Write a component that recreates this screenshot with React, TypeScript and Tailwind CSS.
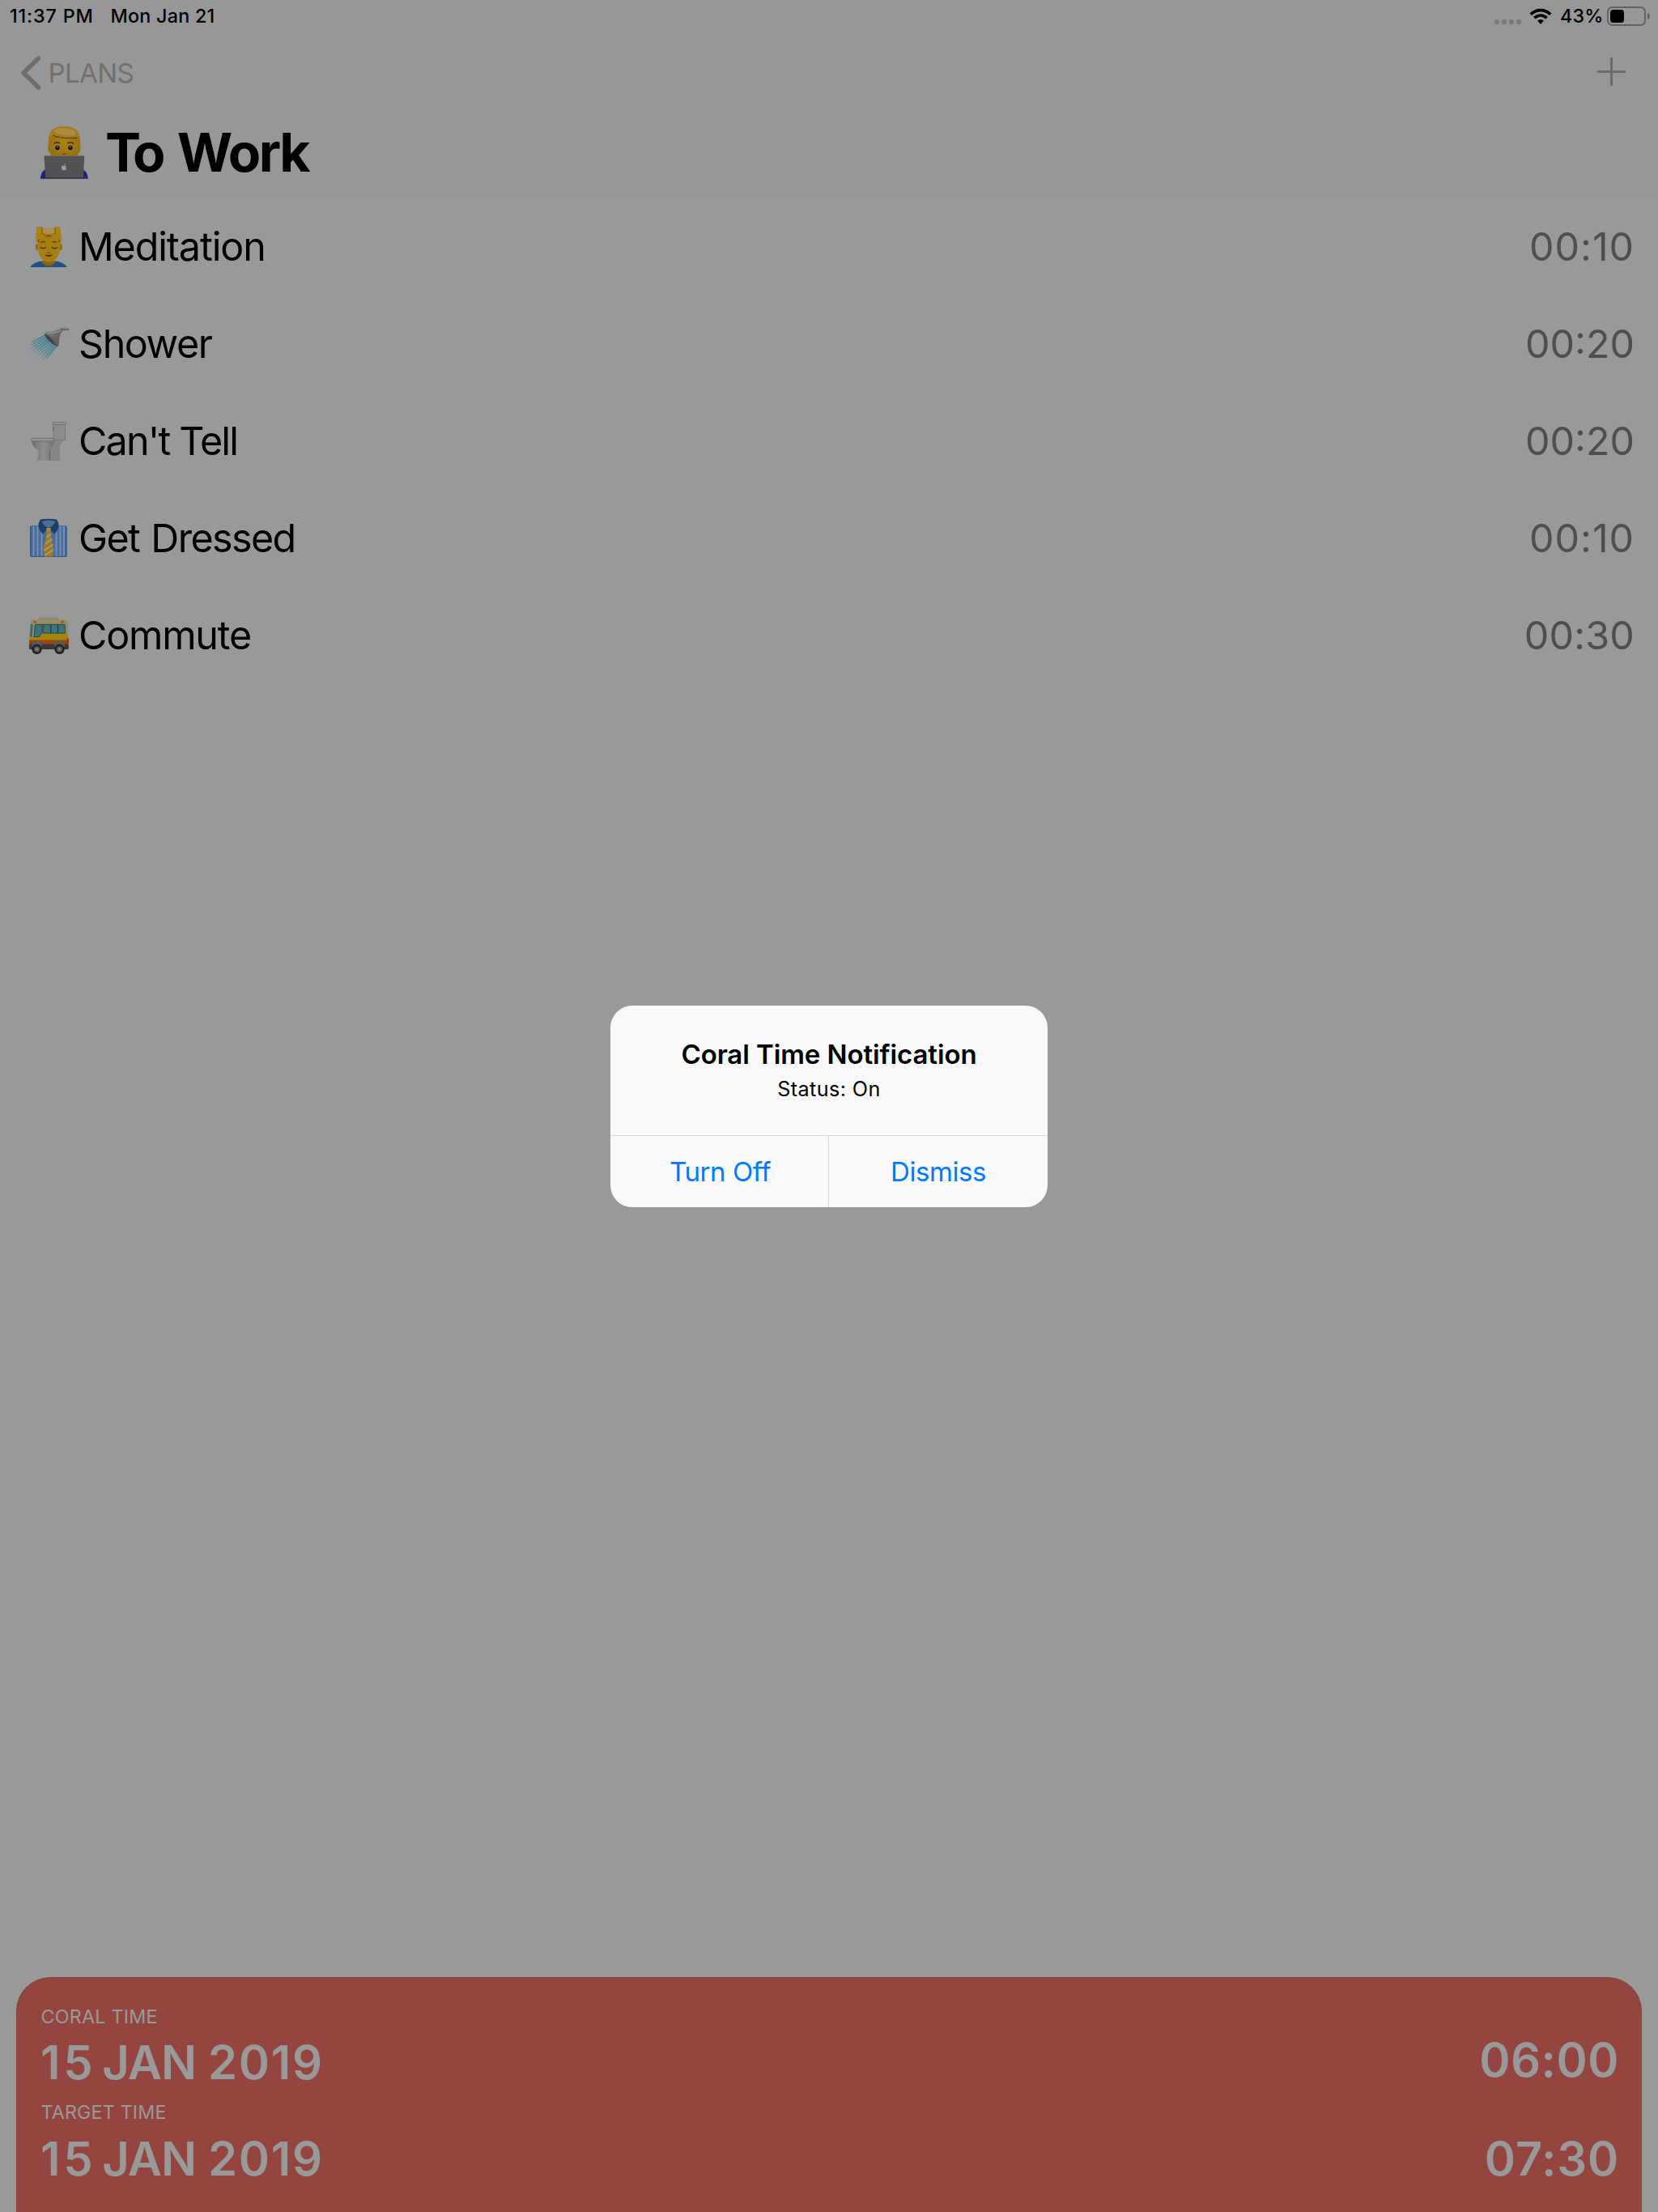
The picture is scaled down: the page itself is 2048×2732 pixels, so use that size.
import type { ReactNode } from 'react';

function TechnologistEmoji() {
  return (
    <svg viewBox="49 156 62 66" className="h-[66px] w-[62px] shrink-0">
      <defs>
        <linearGradient id="hair" x1="0" y1="0" x2="0" y2="1">
          <stop offset="0" stopColor="#a87d1c" />
          <stop offset="0.5" stopColor="#a47b22" />
          <stop offset="1" stopColor="#8d6410" />
        </linearGradient>
        <radialGradient id="face" cx="0.5" cy="0.5" r="0.6">
          <stop offset="0" stopColor="#a98516" />
          <stop offset="1" stopColor="#95700c" />
        </radialGradient>
      </defs>
      <path d="M49.7 221.7 Q51 211.5 57 210 H101 Q107.500 211.500 109 221.700 Z" fill="#1c2183" />
      <ellipse cx="61.500" cy="184" rx="2.200" ry="5" fill="#8d680e" />
      <ellipse cx="97" cy="184" rx="2.200" ry="5" fill="#8d680e" />
      <path d="M60.300 174 Q60 157 79 157 Q98.500 157 98.500 174 V183 Q98.500 190 95 194 H64 Q60.300 189 60.300 183 Z" fill="url(#face)" />
      <path d="M60.300 181 V173 Q60 157 79 157 Q99 157 98.800 173 V181 Q97.500 174 95.500 171.500 Q75 174 65 168 Q62 172 60.300 181 Z" fill="url(#hair)" />
      <path d="M65 168 Q75 173 95.500 171.300" fill="none" stroke="#65430a" strokeWidth="1.200" />
      <path d="M66 163 Q78 155.500 93 163 Q95 169 84 168.500 Q72 168 66 163 Z" fill="#b0904a" opacity="0.8" />
      <path d="M66.500 178.500 Q70 175.500 74 178 M83.500 178 Q87.500 175.500 91 178.500" fill="none" stroke="#4d2f08" strokeWidth="1.800" />
      <ellipse cx="71" cy="183.500" rx="3.500" ry="3.700" fill="#a49167" />
      <ellipse cx="87" cy="183.500" rx="3.500" ry="3.700" fill="#a49167" />
      <circle cx="71" cy="183.500" r="2.900" fill="#20180d" />
      <circle cx="87" cy="183.500" r="2.900" fill="#20180d" />
      <circle cx="71" cy="182.300" r="0.900" fill="#908a7d" />
      <circle cx="87" cy="182.300" r="0.900" fill="#908a7d" />
      <path d="M76.500 190.500 Q79 192.500 81.500 190.500" fill="none" stroke="#6e4c05" strokeWidth="1.400" />
      <path d="M56 193 H102.500 Q104.300 193 104.200 195 L102.800 221.700 H56.300 L54.500 195 Q54.500 193 56 193 Z" fill="#515254" />
      <path d="M55.500 193.500 H103.300" stroke="#6d6e70" strokeWidth="1" />
      <path d="M56.200 220.800 H102.800" stroke="#3a3a3c" strokeWidth="1.600" />
      <path d="M79 206 Q76 204.500 76 208 Q76.500 211.500 78.200 211.300 Q79.200 210.800 80.200 211.300 Q81.600 211.300 82.300 209.200 Q80.300 208 82 205.900 Q80.500 204.900 79 206 Z M79.200 205 Q79.200 203.200 80.800 202.800 Q80.800 204.600 79.200 205 Z" fill="#9c9c9c" />
    </svg>
  );
}

function RowEmoji({ children }: { children: ReactNode }) {
  return (
    <svg viewBox="35 279 50 52" className="mt-[2px] mr-[12px] h-[52px] w-[50px] shrink-0">
      {children}
    </svg>
  );
}

function MassageEmoji() {
  return (
    <RowEmoji>
      <path d="M37 330 Q41 323.500 52 322.500 H68 Q79 323.500 83 330 Z" fill="#235085" />
      <path d="M51 322.500 Q53 328 60 328.500 Q67 328 69 322.500 Z" fill="#8a660b" />
      <path d="M46.500 299 Q45 286 52 283 Q60 280.500 68 283 Q76 286 74.500 299 L72 303 H49 Z" fill="#a17718" />
      <ellipse cx="45.800" cy="305" rx="2" ry="4" fill="#8f6a0d" />
      <ellipse cx="75" cy="305" rx="2" ry="4" fill="#8f6a0d" />
      <path d="M46.500 299 Q48 293 50 292 H70.500 Q73 293 74.500 299 Q75.500 322 60.500 323.700 Q45.500 322 46.500 299 Z" fill="#a57f12" />
      <ellipse cx="60" cy="285.500" rx="8" ry="3.500" fill="#ae9150" />
      <path d="M47.500 299 Q47.500 291.500 52 291 Q59 292.500 60.500 291 Q63 293 70 291 Q73.500 292 73.200 299" fill="none" stroke="#5f410c" strokeWidth="1.300" />
      <path d="M45.300 280 H51.800 V290 Q55 290.500 58.500 292 L50 294 Q46.500 296 45.500 301 Q43.500 296 44.500 290 Z" fill="#aa8211" />
      <path d="M68.200 280 H74 L75.500 290 Q76.800 296 75 301 Q74 296 70.500 294 L62 292 Q65 290.500 68.200 290 Z" fill="#aa8211" />
      <path d="M51.800 280 V290 M68.200 280 V290" stroke="#7c5a0c" strokeWidth="0.900" />
      <path d="M50.500 299.500 Q53 297.500 56 299.200 M64.500 299.200 Q67.500 297.500 70 299.500" fill="none" stroke="#5b3d08" strokeWidth="1.400" />
      <path d="M49.500 305.500 Q53 308 57 305.500 M63.500 305.500 Q67.500 308 71 305.500" fill="none" stroke="#4a3108" strokeWidth="1.300" />
      <path d="M58.500 311.500 Q60.300 313 62 311.500" fill="none" stroke="#76540a" strokeWidth="1.200" />
      <path d="M56 315.300 H64.500 Q60.200 317.800 56 315.300" fill="#49260d" stroke="#49260d" strokeWidth="0.800" />
    </RowEmoji>
  );
}

function ShowerEmoji() {
  return (
    <RowEmoji>
      <defs>
        <linearGradient id="spray" gradientUnits="userSpaceOnUse" x1="64" y1="299" x2="42" y2="322">
          <stop offset="0" stopColor="#37808f" />
          <stop offset="0.6" stopColor="#548995" />
          <stop offset="1" stopColor="#8f9798" stopOpacity="0.1" />
        </linearGradient>
        <linearGradient id="steel" x1="0" y1="0" x2="1" y2="1">
          <stop offset="0" stopColor="#858585" />
          <stop offset="0.5" stopColor="#666" />
          <stop offset="1" stopColor="#4d4d4d" />
        </linearGradient>
      </defs>
      <path
        d="M55.500 294 L39 303 M57 296 L37 307.500 M58.500 298 L36 311.500 M60 299.500 L37.500 314.500 M61.500 301 L39 317.500 M63 302.500 L42 319.500 M64.500 304 L45 321.500 M66 305.500 L48 323.500 M67.500 307 L52.500 324 M69.500 308 L57 323"
        stroke="url(#spray)"
        strokeWidth="1.600"
      />
      <path d="M56 291.500 Q66 293 72 307 L69 307.500 Q58 301 55 293 Z" fill="#444" />
      <path d="M55.500 290.500 Q66 289.500 72.500 287 Q77 284.500 80 284.800 H85 V287.500 H80 Q77 288.500 75 291.500 Q72.500 299 72.500 307 L70.500 308.500 Q65 296 54.800 292 Z" fill="url(#steel)" />
      <path d="M59 291.500 Q69 291.500 75 288" fill="none" stroke="#999" strokeWidth="1.200" />
      <path d="M78 285.500 H85" stroke="#8d8d8d" strokeWidth="1" />
      <path d="M79 287.600 H85" stroke="#5a5a5a" strokeWidth="0.800" />
    </RowEmoji>
  );
}

function ToiletEmoji() {
  return (
    <RowEmoji>
      <defs>
        <linearGradient id="porcelain" x1="0" y1="0" x2="1" y2="0">
          <stop offset="0" stopColor="#6c6c6c" />
          <stop offset="0.5" stopColor="#8f8f8e" />
          <stop offset="1" stopColor="#747473" />
        </linearGradient>
      </defs>
      <path d="M65 302 H80.500 Q73 306 73 315 L74 328.500 H60 V304 Z" fill="#868685" stroke="#777" strokeWidth="0.500" />
      <path d="M65.500 284 H80.500 V303.500 H66.500 Z" fill="#8d8d8b" stroke="#6c6c6b" strokeWidth="0.700" />
      <rect x="65" y="281.500" width="17" height="2.800" rx="1" fill="#959594" stroke="#6a6a69" strokeWidth="0.700" />
      <path d="M39 305 H67 Q66 313 60.500 316 V322 L62 328.800 H46 L47.500 322 V316 Q40 313 39 305 Z" fill="url(#porcelain)" />
      <path d="M61.500 316 V328.500" stroke="#5c5c5c" strokeWidth="0.900" />
      <rect x="38.500" y="301.300" width="28.500" height="3.600" rx="1.800" fill="#939392" stroke="#606060" strokeWidth="0.800" />
      <path d="M66 288 V291" stroke="#5d5d5d" strokeWidth="1" />
    </RowEmoji>
  );
}

function ShirtEmoji() {
  return (
    <RowEmoji>
      <rect x="37.200" y="289" width="45.300" height="38.800" rx="2.500" fill="#4a6c9a" />
      <path d="M41.500 290 V327 M46.500 290 V327 M51.500 290 V327 M69.500 290 V327 M74.500 290 V327 M79 290 V327" stroke="#7590b3" strokeWidth="1.900" />
      <path d="M37.700 290 V327 M82 290 V327" stroke="#2e4e7c" strokeWidth="1" />
      <path d="M38 327.300 H82" stroke="#32527e" strokeWidth="1" />
      <path d="M52 283 Q60 280 68 283 L62 293 H58 Z" fill="#59799b" />
      <path d="M50 281.500 Q60 279.800 70 281.500 L72.500 286.500 Q73 293 67.500 299.500 L60 292.500 L52.500 299.500 Q47 293 47.500 286.500 Z" fill="#1c3d66" />
      <path d="M51.500 284 Q60 281 68.500 284 Q66 290 60 292 Q54 290 51.500 284 Z" fill="#4b6d92" />
      <path d="M57 292 H63 L62.300 298.500 L66.300 318 L65 327.500 H55 L53.700 318 L57.700 298.500 Z" fill="#a3791e" />
      <path d="M57.500 303.500 L63 299.500 M55.800 312 L64.500 305.500 M54.500 320 L65.500 312.500 M55.500 326 L66 319" stroke="#a29b87" strokeWidth="1.900" />
      <ellipse cx="60" cy="294" rx="2.500" ry="1.800" fill="#9b8c67" />
    </RowEmoji>
  );
}

function BusEmoji() {
  return (
    <RowEmoji>
      <rect x="48" y="282.500" width="24.500" height="3.500" rx="1.500" fill="#8d8872" />
      <path d="M39 286.500 Q39.500 285 42 285 H79 Q83 285 83.500 289 L84.300 307 V317 H36 V309 L37 293 Q38 288 39 286.500 Z" fill="#958d68" />
      <path d="M41 306 H50 L53 302.500 H83.300 L84.300 311 H36 Q36.500 307 41 306 Z" fill="#a28609" />
      <rect x="36" y="310.500" width="48.500" height="5.500" fill="#9b4210" />
      <rect x="36" y="315.500" width="48.800" height="6.500" rx="1.500" fill="#37383a" />
      <path d="M38 291 H40.800 L39.500 306.500 H36.800 Z" fill="#356b70" />
      <path d="M43.500 291.300 H52 V301 L48.500 306.500 H42 Z" fill="#3d747a" stroke="#263b3d" strokeWidth="0.900" />
      <path d="M53 291.300 H80 L80.500 302 H53 Z" fill="#3d747a" stroke="#263b3d" strokeWidth="0.900" />
      <path d="M62.800 291.300 V302 M71.500 291.300 V302" stroke="#26393b" strokeWidth="1.200" />
      <rect x="41" y="287" width="4" height="2.600" rx="0.800" fill="#9d5b0b" />
      <rect x="75" y="287" width="4" height="2.600" rx="0.800" fill="#9d5b0b" />
      <rect x="83" y="308.500" width="1.800" height="6" fill="#962d22" />
      <path d="M39 319 Q39 311.500 45.500 311.500 Q52 311.500 52 319 Z M67 319 Q67 311.500 73.500 311.500 Q80 311.500 80 319 Z" fill="#56585a" />
      <circle cx="45.500" cy="321.800" r="6.200" fill="#232325" />
      <circle cx="73.500" cy="321.800" r="6.200" fill="#232325" />
      <circle cx="45.500" cy="321.800" r="3.500" fill="#5c5d60" />
      <circle cx="73.500" cy="321.800" r="3.500" fill="#5c5d60" />
      <circle cx="45.500" cy="321.800" r="1.400" fill="#8b8c8e" />
      <circle cx="73.500" cy="321.800" r="1.400" fill="#8b8c8e" />
    </RowEmoji>
  );
}

const activities = [
  { icon: <MassageEmoji />, name: 'Meditation', tracking: 'tracking-[-1.1px]', time: '00:10', timeTracking: 'tracking-[0.95px]' },
  { icon: <ShowerEmoji />, name: 'Shower', tracking: 'tracking-[-1.4px]', time: '00:20', timeTracking: 'tracking-[0px]' },
  { icon: <ToiletEmoji />, name: "Can't Tell", tracking: 'tracking-[-1.8px]', time: '00:20', timeTracking: 'tracking-[0px]' },
  { icon: <ShirtEmoji />, name: 'Get Dressed', tracking: 'tracking-[-1.6px] [word-spacing:2px]', time: '00:10', timeTracking: 'tracking-[0.95px]' },
  { icon: <BusEmoji />, name: 'Commute', tracking: 'tracking-[-1.2px]', time: '00:30', timeTracking: 'tracking-[0.15px]' },
];

function StatusBar() {
  return (
    <div className="flex h-[39px] items-center pl-[12px] pr-[9px] text-[23.3px] leading-[39px] font-medium">
      <span className="w-[124.5px] tracking-[0.85px]">11:37 PM</span>
      <span className="tracking-[0.25px]">Mon Jan 21</span>
      <div className="ml-auto flex h-full items-center">
        <div className="mt-[15px] mr-[10px] flex gap-[3px]">
          {[0, 1, 2, 3].map((dot) => (
            <span key={dot} className="size-[6px] rounded-[2px] bg-[#7b7b7b]" />
          ))}
        </div>
        <svg viewBox="0 0 28 20" className="mr-[10px] h-[20px] w-[28px]">
          <path d="M1.800 7.700 C8.500 0.800 19.500 0.800 26.200 7.700" fill="none" stroke="#000" strokeWidth="3.800" />
          <path d="M6.400 12.100 C11 8 17 8 21.600 12.100" fill="none" stroke="#000" strokeWidth="3.800" />
          <path d="M10 15.600 Q14 12.200 18 15.600 L14.700 19.200 Q14 20 13.300 19.200 Z" fill="#000" />
        </svg>
        <span className="w-[58px] tracking-[0.2px]">43%</span>
        <svg viewBox="0 0 54 24" className="mt-[1px] h-[24px] w-[54px]">
          <rect x="1" y="1" width="46" height="22" rx="5.500" fill="none" stroke="#636363" strokeWidth="2" />
          <rect x="4" y="4" width="17" height="16" rx="3.500" fill="#000" />
          <path d="M50 8 Q53 9 53 12 Q53 15 50 16 Z" fill="#636363" />
        </svg>
      </div>
    </div>
  );
}

function DateLabel() {
  return (
    <span>
      <span className="mr-[-7px] tracking-[3.8px]">15</span> <span className="tracking-[-0.9px]">JAN</span>{' '}
      <span className="tracking-[1.7px]">2019</span>
    </span>
  );
}

export default function App() {
  return (
    <div className="relative flex h-[2732px] w-[2048px] flex-col overflow-hidden bg-[#999999] font-['Inter','Liberation_Sans',sans-serif] text-black">
      <header className="h-[244px] bg-[#979797]">
        <StatusBar />
        <nav className="flex h-[102px] items-center justify-between pl-[25px] pr-[40px]">
          <button className="flex items-center text-[33px] leading-[40px] font-normal tracking-[-0.6px] text-[#717171]">
            <svg viewBox="0 0 26 44" className="mr-[8.5px] h-[44px] w-[26px]">
              <path d="M22.500 4 L4 22 L22.500 40" fill="none" stroke="#6e6e6e" strokeWidth="5.500" strokeLinecap="round" strokeLinejoin="round" />
            </svg>
            PLANS
          </button>
          <svg viewBox="0 0 35 35" className="mb-[3px] size-[35px]">
            <path d="M17.500 0 V35 M0 17.500 H35" stroke="#6b6b6b" strokeWidth="3" />
          </svg>
        </nav>
        <h1 className="flex h-[94px] items-center pl-[49px] text-[66px] leading-[94px] font-bold">
          <TechnologistEmoji />
          <span className="ml-[19px] tracking-[-2.4px] [word-spacing:3.5px]">
            <span className="tracking-[-10px]">T</span>o Work
          </span>
        </h1>
      </header>

      <ul>
        {activities.map((a) => (
          <li key={a.name} className="flex h-[120px] items-center pl-[35px] pr-[29px] text-[48.4px] leading-[120px]">
            {a.icon}
            <span className={`mt-[2px] ${a.tracking}`}>{a.name}</span>
            <span className={`mt-[2px] ml-auto text-[#4f4f4f] ${a.timeTracking}`}>{a.time}</span>
          </li>
        ))}
      </ul>

      <section className="mx-[20px] mt-auto h-[290px] rounded-t-[42px] border border-b-0 border-[#7d403c] bg-[#95453f] pt-[32px] pr-[27px] pl-[29px] text-[#999999]">
        <div className="h-[31px] pl-[0.5px] text-[23.3px] leading-[31px] tracking-[0.22px]">CORAL TIME</div>
        <div className="flex h-[82px] justify-between text-[58px] leading-[82px] font-semibold">
          <DateLabel />
          <span className="leading-[76px] tracking-[0.5px]">06:00</span>
        </div>
        <div className="h-[41px] pl-[0.5px] text-[23.3px] leading-[41px] tracking-[0.15px]">TARGET TIME</div>
        <div className="flex h-[74px] justify-between text-[58px] leading-[74px] font-semibold">
          <DateLabel />
          <span className="tracking-[0.8px]">07:30</span>
        </div>
      </section>

      <div className="absolute inset-0 flex items-start justify-center pt-[1242px]">
        <div role="alertdialog" className="flex h-[249px] w-[540px] flex-col overflow-hidden rounded-[27px] bg-[#f9f9f9] text-center">
          <div className="h-[160px] pt-[40px]">
            <h2 className="text-[33px] leading-[40px] font-semibold tracking-[-0.09px]">Coral Time Notification</h2>
            <p className="text-[25.2px] leading-[46px] tracking-[0.4px]">Status: On</p>
          </div>
          <div className="grid h-[89px] grid-cols-2 border-t border-[#d8d9dc] text-[33px] leading-[88px] tracking-[-0.45px] text-[#007aff]">
            <button className="border-r border-[#d8d9dc] pl-[2px]">Turn Off</button>
            <button>Dismiss</button>
          </div>
        </div>
      </div>
    </div>
  );
}
